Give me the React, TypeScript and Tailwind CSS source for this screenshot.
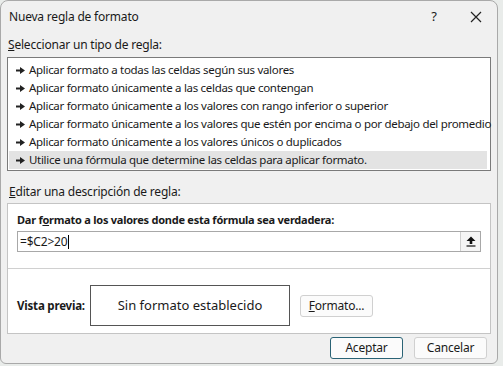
import React from 'react'

const rules = [
  'Aplicar formato a todas las celdas según sus valores',
  'Aplicar formato únicamente a las celdas que contengan',
  'Aplicar formato únicamente a los valores con rango inferior o superior',
  'Aplicar formato únicamente a los valores que estén por encima o por debajo del promedio',
  'Aplicar formato únicamente a los valores únicos o duplicados',
  'Utilice una fórmula que determine las celdas para aplicar formato.',
]

function Pointer() {
  return (
    <svg width="9" height="7" viewBox="0 0 9 7" className="shrink-0">
      <path d="M0 2.5h4V0l5 3.5L4 7V4.5H0z" fill="#222" />
    </svg>
  )
}

export default function App() {
  return (
    <div
      className="w-[503px] h-[366px] bg-[#e9ecea] overflow-hidden text-[12px] text-[#1a1a1a] tracking-[-0.2px]"
      style={{ fontFamily: '"Noto Sans", "Open Sans", sans-serif' }}
    >
      <div className="w-[498px] h-[364px] bg-[#f0f0f0] border border-[#a9a9a9] rounded-t-[8px] rounded-b-[6px] flex flex-col">
        {/* barra de título */}
        <div className="h-[32px] flex items-center pl-[8px] pr-[8px]">
          <span className="text-[12px] flex-1">Nueva regla de formato</span>
          <span className="w-[20px] text-center text-[13px] mr-[26px]">?</span>
          <svg width="12" height="12" viewBox="0 0 12 12" className="mr-[7px]">
            <path d="M1 1l10 10M11 1L1 11" stroke="#222" strokeWidth="1.2" />
          </svg>
        </div>

        <div className="px-[6px] flex flex-col">
          <div className="h-[24px] flex items-end pb-[3px] pl-[1px]">
            <span><u>S</u>eleccionar un tipo de regla:</span>
          </div>

          {/* lista de reglas */}
          <div className="h-[114px] border border-[#7a7a7a] bg-white pt-[3px] px-[1px] text-[11.5px] tracking-[-0.3px]">
            {rules.map((r, i) => (
              <div
                key={r}
                className={`h-[18px] flex items-center gap-[4px] pl-[7px] whitespace-nowrap ${
                  i === rules.length - 1 ? 'bg-[#e3e3e3] mr-[2px]' : ''
                }`}
              >
                <Pointer />
                <span>{r}</span>
              </div>
            ))}
          </div>

          <div className="h-[32px] flex items-end pb-[2px] pl-[2px]">
            <span><u>E</u>ditar una descripción de regla:</span>
          </div>

          {/* descripción */}
          <div className="h-[131px] border border-[#c4c4c4] bg-white flex flex-col">
            <div className="px-[9px] pt-[7px]">
              <div className="font-bold text-[11px] tracking-[-0.25px] h-[18px] flex items-center">
                Dar f<u>o</u>rmato a los valores donde esta fórmula sea verdadera:
              </div>
              <div className="mt-[2px] h-[21px] border border-[#a8a8a8] flex items-center">
                <span className="pl-[2px] flex-1 flex items-center">
                  =$C2&gt;20<span className="w-px h-[14px] bg-black ml-[1px]" />
                </span>
                <div className="w-[20px] h-[19px] border-l border-[#cfcfcf] bg-[#f5f5f5] flex items-center justify-center">
                  <svg width="10" height="11" viewBox="0 0 10 11">
                    <path d="M5 0.5L9.5 5H6.3v3H3.7V5H0.5z" fill="#111" />
                    <path d="M0.5 10h9" stroke="#111" strokeWidth="1.2" />
                  </svg>
                </div>
              </div>
            </div>
            <div className="mt-[16px] border-t border-[#d0d0d0]" />
            <div className="flex items-center pl-[9px] mt-[16px]">
              <span className="font-bold text-[11.5px] w-[73px]">Vista previa:</span>
              <div className="w-[200px] h-[41px] border border-[#555] flex items-center justify-center text-[13px] tracking-normal">
                Sin formato establecido
              </div>
              <button className="ml-[10px] w-[73px] h-[22px] border border-[#d0d0d0] rounded-[3px] bg-[#fbfbfb] text-[12px]">
                <u>F</u>ormato...
              </button>
            </div>
          </div>

          {/* botones */}
          <div className="flex justify-end gap-[11px] pr-[4px] mt-[3px]">
            <button className="w-[73px] h-[22px] border border-[#2a6375] rounded-[3px] bg-[#fbfbfb]">
              Aceptar
            </button>
            <button className="w-[73px] h-[22px] border border-[#d0d0d0] rounded-[3px] bg-[#fbfbfb]">
              Cancelar
            </button>
          </div>
        </div>
      </div>
    </div>
  )
}
